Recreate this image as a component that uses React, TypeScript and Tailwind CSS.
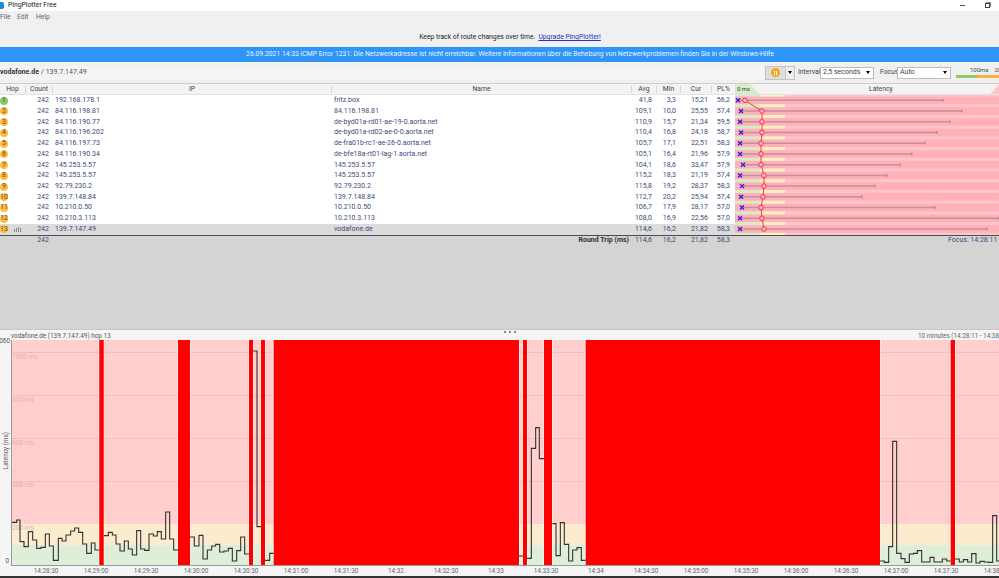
const hops = [
  { n: 1, ip: "192.168.178.1", name: "fritz.box", avg: "41,8", min: "3,3", cur: "15,21", pl: "56,2" },
  { n: 2, ip: "84.116.198.81", name: "84.116.198.81", avg: "109,1", min: "10,0", cur: "25,55", pl: "57,4" },
  { n: 3, ip: "84.116.190.77", name: "de-byd01a-rd01-ae-19-0.aorta.net", avg: "110,9", min: "15,7", cur: "21,34", pl: "59,5" },
  { n: 4, ip: "84.116.196.202", name: "de-byd01a-rd02-ae-0-0.aorta.net", avg: "110,4", min: "16,8", cur: "24,18", pl: "58,7" },
  { n: 5, ip: "84.116.197.73", name: "de-fra01b-rc1-ae-26-0.aorta.net", avg: "105,7", min: "17,1", cur: "22,51", pl: "58,3" },
  { n: 6, ip: "84.116.190.34", name: "de-bfe18a-rt01-lag-1.aorta.net", avg: "105,1", min: "16,4", cur: "21,96", pl: "57,9" },
  { n: 7, ip: "145.253.5.57", name: "145.253.5.57", avg: "104,1", min: "18,6", cur: "33,47", pl: "57,9" },
  { n: 8, ip: "145.253.5.57", name: "145.253.5.57", avg: "115,2", min: "18,3", cur: "21,19", pl: "57,4" },
  { n: 9, ip: "92.79.230.2", name: "92.79.230.2", avg: "115,8", min: "19,2", cur: "28,37", pl: "58,3" },
  { n: 10, ip: "139.7.148.84", name: "139.7.148.84", avg: "112,7", min: "20,2", cur: "25,94", pl: "57,4" },
  { n: 11, ip: "10.210.0.50", name: "10.210.0.50", avg: "106,7", min: "17,9", cur: "28,17", pl: "57,0" },
  { n: 12, ip: "10.210.3.113", name: "10.210.3.113", avg: "108,0", min: "16,9", cur: "22,56", pl: "57,0" },
  { n: 13, ip: "139.7.147.49", name: "vodafone.de", avg: "114,6", min: "16,2", cur: "21,82", pl: "58,3" },
];

// x of min marker, avg circle and max whisker per hop, px inside the latency column
const marks = [
  [3, 10, 208], [6, 27, 227], [5, 27, 215], [6, 27, 202], [5, 26, 190], [5, 26, 177], [8, 26, 165],
  [5, 29, 152], [7, 29, 140], [6, 28, 127], [7, 26, 200], [5, 27, 264], [5, 29, 252],
];

const ROW = 10.72;

function LatencyGraph() {
  return (
    <svg width="264" height="139.4" className="block shrink-0">
      <rect x="0" y="0" width="25" height="140" fill="#d5ecc8" />
      <rect x="25" y="0" width="25" height="140" fill="#fff0c4" />
      <rect x="50" y="0" width="214" height="140" fill="#ffc6ca" />
      {marks.map((m, i) => {
        const cy = ROW * i + ROW / 2;
        return (
          <g key={i}>
            <rect x="0" y={cy - 3.8} width="264" height="7.6" fill="#ffb0b8" />
            <line x1={m[0]} x2={m[2]} y1={cy} y2={cy} stroke="#c48f9c" strokeWidth="1.5" />
            <line x1={m[2]} x2={m[2]} y1={cy - 1.5} y2={cy + 1.5} stroke="#a8808c" strokeWidth="1" />
          </g>
        );
      })}
      <polyline
        points={marks.map((m, i) => `${m[1]},${ROW * i + ROW / 2}`).join(" ")}
        fill="none"
        stroke="#ee3b50"
        strokeWidth="1"
      />
      {marks.map((m, i) => {
        const cy = ROW * i + ROW / 2;
        return (
          <g key={i}>
            <path
              d={`M${m[0] - 2} ${cy - 2}L${m[0] + 2} ${cy + 2}M${m[0] + 2} ${cy - 2}L${m[0] - 2} ${cy + 2}`}
              stroke="#3322dd"
              strokeWidth="1.4"
            />
            <circle cx={m[1]} cy={cy} r="2.3" fill="#ffb0b8" stroke="#ee3b50" strokeWidth="1" />
          </g>
        );
      })}
    </svg>
  );
}

// red loss bars, in page px
const lossBars = [
  [99.3, 103.7], [178, 190], [249, 253], [261, 265], [273.7, 519], [523, 527], [544, 552], [585.7, 880], [950.7, 955],
];

// latency trace read off the plot: offset, start x, then [end x, y] steps (3x units)
const traces: { ox: number; sx: number; steps: number[][] }[] = [
  { ox: 0, sx: 35, steps: [[50, 592], [60, 585], [72, 650], [85, 665], [98, 620], [110, 645], [123, 670], [136, 667], [148, 627], [160, 663], [175, 706], [186, 640], [198, 648], [212, 630], [224, 618], [236, 609], [248, 622], [260, 657], [274, 685], [285, 654], [298, 675]] },
  { ox: 0, sx: 311, steps: [[325, 632], [337, 622], [348, 630], [360, 657], [373, 678], [385, 648], [397, 672], [410, 690], [422, 617], [434, 672], [447, 676], [460, 627], [472, 633], [484, 620], [497, 642], [509, 561], [521, 642], [534, 675]] },
  { ox: 0, sx: 570, steps: [[583, 636], [597, 663], [609, 631], [622, 702], [635, 675], [647, 663], [659, 658], [672, 681], [685, 678], [697, 670], [710, 708], [722, 677], [734, 636], [747, 687]] },
  { ox: 0, sx: 759, steps: [[771, 78], [783, 605]] },
  { ox: 0, sx: 795, steps: [[809, 706], [821, 685]] },
  { ox: 300, sx: 657, steps: [[669, 693]] },
  { ox: 300, sx: 681, steps: [[694, 700], [707, 370], [718, 308], [732, 401]] },
  { ox: 300, sx: 757, steps: [[768, 596], [781, 692], [793, 593], [806, 658], [818, 708], [831, 675], [844, 668], [857, 706]] },
  { ox: 699, sx: 543, steps: [[556, 708], [569, 712], [581, 665], [593, 349], [606, 685], [618, 701], [631, 712], [643, 687], [655, 685], [668, 677], [693, 711], [705, 697], [730, 711], [743, 702], [755, 708]] },
  { ox: 699, sx: 768, steps: [[781, 702], [793, 711], [806, 704], [818, 711], [831, 686], [843, 714], [856, 709], [868, 711], [881, 712], [893, 572], [900, 708]] },
];

function tracePath(t: { ox: number; sx: number; steps: number[][] }) {
  const px = (z: number) => t.ox + z / 3 - 11;
  const py = (z: number) => z / 3 - 15;
  let d = `M${px(t.sx)} ${py(t.steps[0][1])}`;
  for (const [x, y] of t.steps) d += `V${py(y)}H${px(x)}`;
  return d;
}

function TimelineGraph() {
  return (
    <svg width="988" height="226" className="block shrink-0">
      <rect x="0" y="0" width="988" height="184" fill="#ffcfcd" />
      <rect x="0" y="184" width="988" height="21" fill="#fdebd0" />
      <rect x="0" y="205" width="988" height="21" fill="#dfeed8" />
      {[12, 55, 98, 141].map((y) => (
        <line key={y} x1="0" x2="988" y1={y + 0.5} y2={y + 0.5} stroke="#f3bdbb" />
      ))}
      {[
        ["1000 ms", 19],
        ["800 ms", 62],
        ["600 ms", 105],
        ["400 ms", 147],
        ["200 ms", 190],
      ].map(([label, y]) => (
        <text key={label} x="1" y={y} fontSize="6.6" fill="#dcb4b0">
          {label}
        </text>
      ))}
      {lossBars.map(([a, b]) => (
        <g key={a}>
          <rect x={a - 12} y="0" width="1" height="226" fill="#ffffff" fillOpacity="0.5" />
          <rect x={b - 11} y="0" width="1" height="226" fill="#ffffff" fillOpacity="0.5" />
          <rect x={a - 11} y="0" width={b - a} height="226" fill="#ff0000" />
        </g>
      ))}
      {traces.map((t, i) => (
        <path key={i} d={tracePath(t)} fill="none" stroke="#333333" strokeWidth="1.1" />
      ))}
      <line x1="0.5" x2="0.5" y1="0" y2="226" stroke="#9a9a9a" />
      <line x1="0" x2="988" y1="225.5" y2="225.5" stroke="#9a9a9a" />
    </svg>
  );
}

function Select({ value }: { value: string }) {
  return (
    <div className="w-[54px] shrink-0 h-[12px] bg-white border border-[#bdbdbd] flex items-center justify-between pl-[2px] pr-[3px] text-[7px] text-[#444]">
      <span>{value}</span>
      <span className="w-0 h-0 border-l-[2.5px] border-r-[2.5px] border-t-[3px] border-l-transparent border-r-transparent border-t-black" />
    </div>
  );
}

const timeLabels = [
  "14:28:30", "14:29:00", "14:29:30", "14:30:00", "14:30:30", "14:31:00", "14:31:30", "14:32", "14:32:30", "14:33",
  "14:33:30", "14:34", "14:34:30", "14:35:00", "14:35:30", "14:36:00", "14:36:30", "14:37:00", "14:37:30", "14:38:00",
];

export default function App() {
  return (
    <div className="w-[999px] h-[578px] overflow-hidden flex flex-col bg-[#f0f0f0] text-[6.8px] leading-none text-[#333] font-['Roboto','Liberation_Sans',sans-serif]">
      {/* title bar */}
      <div className="h-[11px] shrink-0 bg-white flex items-center">
        <div className="w-[4px] h-[7px] bg-[#1a8ad8] rounded-r-[2px]" />
        <span className="ml-[4px] text-[#222]">PingPlotter Free</span>
        <div className="ml-auto flex items-center gap-[20px] pr-[9px]">
          <div className="w-[5px] h-px bg-[#555]" />
          <div className="w-[5px] h-[5px] border border-[#444] shadow-[1px_-1px_0_#888]" />
        </div>
      </div>
      {/* menu */}
      <div className="h-[12px] shrink-0 flex items-center text-[#666]">
        <span className="w-[17px]">File</span>
        <span className="w-[19px]">Edit</span>
        <span>Help</span>
      </div>
      {/* promo */}
      <div className="h-[24px] shrink-0 flex items-center justify-center pl-[21px] pt-[5px] text-[#222]">
        <span>Keep track of route changes over time.</span>
        <span className="ml-[3px] text-[#2233bb] underline">Upgrade PingPlotter!</span>
      </div>
      {/* notice */}
      <div className="h-[15px] shrink-0 bg-[#2f95f8] text-[#e8f3ff] flex items-center justify-center pl-[21px]">
        26.09.2021 14:33 ICMP Error 1231: Die Netzwerkadresse ist nicht erreichbar. Weitere Informationen über die Behebung von Netzwerkproblemen finden Sie in der Windows-Hilfe
      </div>
      {/* toolbar */}
      <div className="h-[22px] shrink-0 flex items-center border-b border-[#cfcfcf]">
        <div className="w-[764px] shrink-0 h-[14px] bg-[#f4f4f4] flex items-center text-[7px]">
          <span className="font-bold text-[#333]">vodafone.de</span>
          <span className="ml-[2px] text-[#555]">/ 139.7.147.49</span>
        </div>
        <div className="ml-[1px] w-[30px] shrink-0 h-[14px] flex border border-[#c4c4c4] bg-[#dedede]">
          <div className="w-[19px] flex items-center justify-center">
            <div className="w-[9px] h-[9px] rounded-full bg-[#f5a623] flex items-center justify-center gap-px">
              <div className="w-px h-[4px] bg-white" />
              <div className="w-px h-[4px] bg-white" />
            </div>
          </div>
          <div className="flex-1 flex items-center justify-center bg-[#eeeeee] border-l border-[#c4c4c4]">
            <span className="w-0 h-0 border-l-[2.5px] border-r-[2.5px] border-t-[3px] border-l-transparent border-r-transparent border-t-black" />
          </div>
        </div>
        <span className="w-[25px] shrink-0 pl-[3px] text-[#444]">Interval</span>
        <Select value="2,5 seconds" />
        <span className="w-[23px] shrink-0 pl-[6px] text-[#444]">Focus</span>
        <Select value="Auto" />
        <div className="ml-[5px] flex flex-col w-[43px] shrink-0 overflow-hidden">
          <div className="flex pl-[14px] gap-[6px] text-[6px] whitespace-nowrap text-[#444]">
            <span>100ms</span>
            <span>200</span>
          </div>
          <div className="flex h-[3px] mt-[2px]">
            <div className="w-[21px] bg-[#8fc968]" />
            <div className="flex-1 bg-[#fbb040]" />
          </div>
        </div>
      </div>
      {/* column header */}
      <div className="h-[11.4px] shrink-0 flex items-center bg-[#f3f3f3] text-[#444] border-b border-[#e2e2e2]">
        <div className="w-[26px] text-center border-r border-[#d6d6d6]">Hop</div>
        <div className="w-[27px] text-center border-r border-[#d6d6d6]">Count</div>
        <div className="w-[279px] text-center border-r border-[#d6d6d6]">IP</div>
        <div className="w-[300px] text-center border-r border-[#d6d6d6]">Name</div>
        <div className="w-[25px] text-center border-r border-[#d6d6d6]">Avg</div>
        <div className="w-[24px] text-center border-r border-[#d6d6d6]">Min</div>
        <div className="w-[31px] text-center border-r border-[#d6d6d6]">Cur</div>
        <div className="w-[23px] text-center">PL%</div>
        <div className="relative flex-1 h-full flex items-center">
          <div className="absolute left-0 top-0 h-full w-[25px] bg-[#d5ecc8] [clip-path:polygon(0_0,60%_0,100%_100%,0_100%)]" />
          <div className="absolute right-0 top-0 h-full w-[9px] bg-[#ffc6ca] [clip-path:polygon(100%_0,100%_100%,0_100%)]" />
          <span className="relative ml-[2px] w-[132px] text-[6px]">0 ms</span>
          <span className="relative">Latency</span>
        </div>
      </div>
      {/* hop table */}
      <div className="shrink-0 flex">
        <div className="w-[735px] bg-white text-[7px] text-[#3d4a78]">
          {hops.map((h) => (
            <div key={h.n} className={`h-[10.72px] flex items-center ${h.n === 13 ? "bg-[#dcdcdc]" : "bg-white"}`}>
              <div className="w-[26px] flex items-center">
                <div className={`min-w-[8px] h-[8px] rounded-full flex items-center justify-center text-[#5f5020] ${h.n === 1 ? "bg-[#8ac765]" : "bg-[#fdbb45]"}`}>
                  {h.n}
                </div>
                {h.n === 13 && (
                  <div className="ml-[6px] flex items-end gap-px h-[5px]">
                    <div className="w-px h-[3px] bg-[#888]" />
                    <div className="w-px h-[4px] bg-[#888]" />
                    <div className="w-px h-[5px] bg-[#888]" />
                    <div className="w-px h-[4px] bg-[#888]" />
                  </div>
                )}
              </div>
              <div className="w-[23px] text-right">242</div>
              <div className="w-[285px] pl-[6px]">{h.ip}</div>
              <div className="w-[286px]">{h.name}</div>
              <div className="w-[32px] text-right">{h.avg}</div>
              <div className="w-[24px] text-right">{h.min}</div>
              <div className="w-[32px] text-right">{h.cur}</div>
              <div className="w-[22px] text-right">{h.pl}</div>
            </div>
          ))}
        </div>
        <LatencyGraph />
      </div>
      {/* summary */}
      <div className="flex-1 min-h-0 bg-[#d4d4d4] border-t border-[#4d4d4d] text-[7px] text-[#3d4a78] overflow-hidden">
        <div className="h-[10px] flex items-center whitespace-nowrap">
          <div className="w-[49px] shrink-0 text-right">242</div>
          <div className="w-[580px] shrink-0 text-right font-bold text-[#333]">Round Trip (ms)</div>
          <div className="w-[23px] shrink-0 text-right">114,6</div>
          <div className="w-[24px] shrink-0 text-right">16,2</div>
          <div className="w-[32px] shrink-0 text-right">21,82</div>
          <div className="w-[22px] shrink-0 text-right">58,3</div>
          <div className="ml-[218px] shrink-0">Focus: 14:28:11 - 14:38:11</div>
        </div>
      </div>
      {/* timeline panel */}
      <div className="h-[249px] shrink-0 flex flex-col bg-[#f5f5f5] border-t border-[#c8c8c8] text-[6.4px]">
        <div className="relative h-[10px] shrink-0 flex items-center pt-[2px] pl-[11px] text-[#555] whitespace-nowrap overflow-hidden">
          <span className="w-[907px] shrink-0">vodafone.de (139.7.147.49) hop 13</span>
          <div className="absolute left-[504px] top-[1px] flex gap-[3px]">
            <div className="w-[2px] h-[2px] rounded-full bg-[#666]" />
            <div className="w-[2px] h-[2px] rounded-full bg-[#666]" />
            <div className="w-[2px] h-[2px] rounded-full bg-[#666]" />
          </div>
          <span className="shrink-0 text-[#666]">10 minutes (14:28:11 - 14:38:11)</span>
        </div>
        <div className="flex shrink-0 h-[226px]">
          <div className="w-[11px] shrink-0 flex flex-col items-end justify-between pr-[1px] pb-[1px] text-[#555]">
            <span className="whitespace-nowrap mt-[-2px]">1060</span>
            <span className="whitespace-nowrap [writing-mode:vertical-rl] rotate-180 mr-[1px]">Latency (ms)</span>
            <span className="mb-[1px] mr-[1px]">0</span>
          </div>
          <TimelineGraph />
        </div>
        <div className="h-[10px] shrink-0 flex pl-[21px] items-center text-[#666] whitespace-nowrap">
          {timeLabels.map((t) => (
            <div key={t} className="w-[50px] shrink-0 text-center">
              {t}
            </div>
          ))}
        </div>
        <div className="flex-1 bg-[#333]" />
      </div>
    </div>
  );
}
